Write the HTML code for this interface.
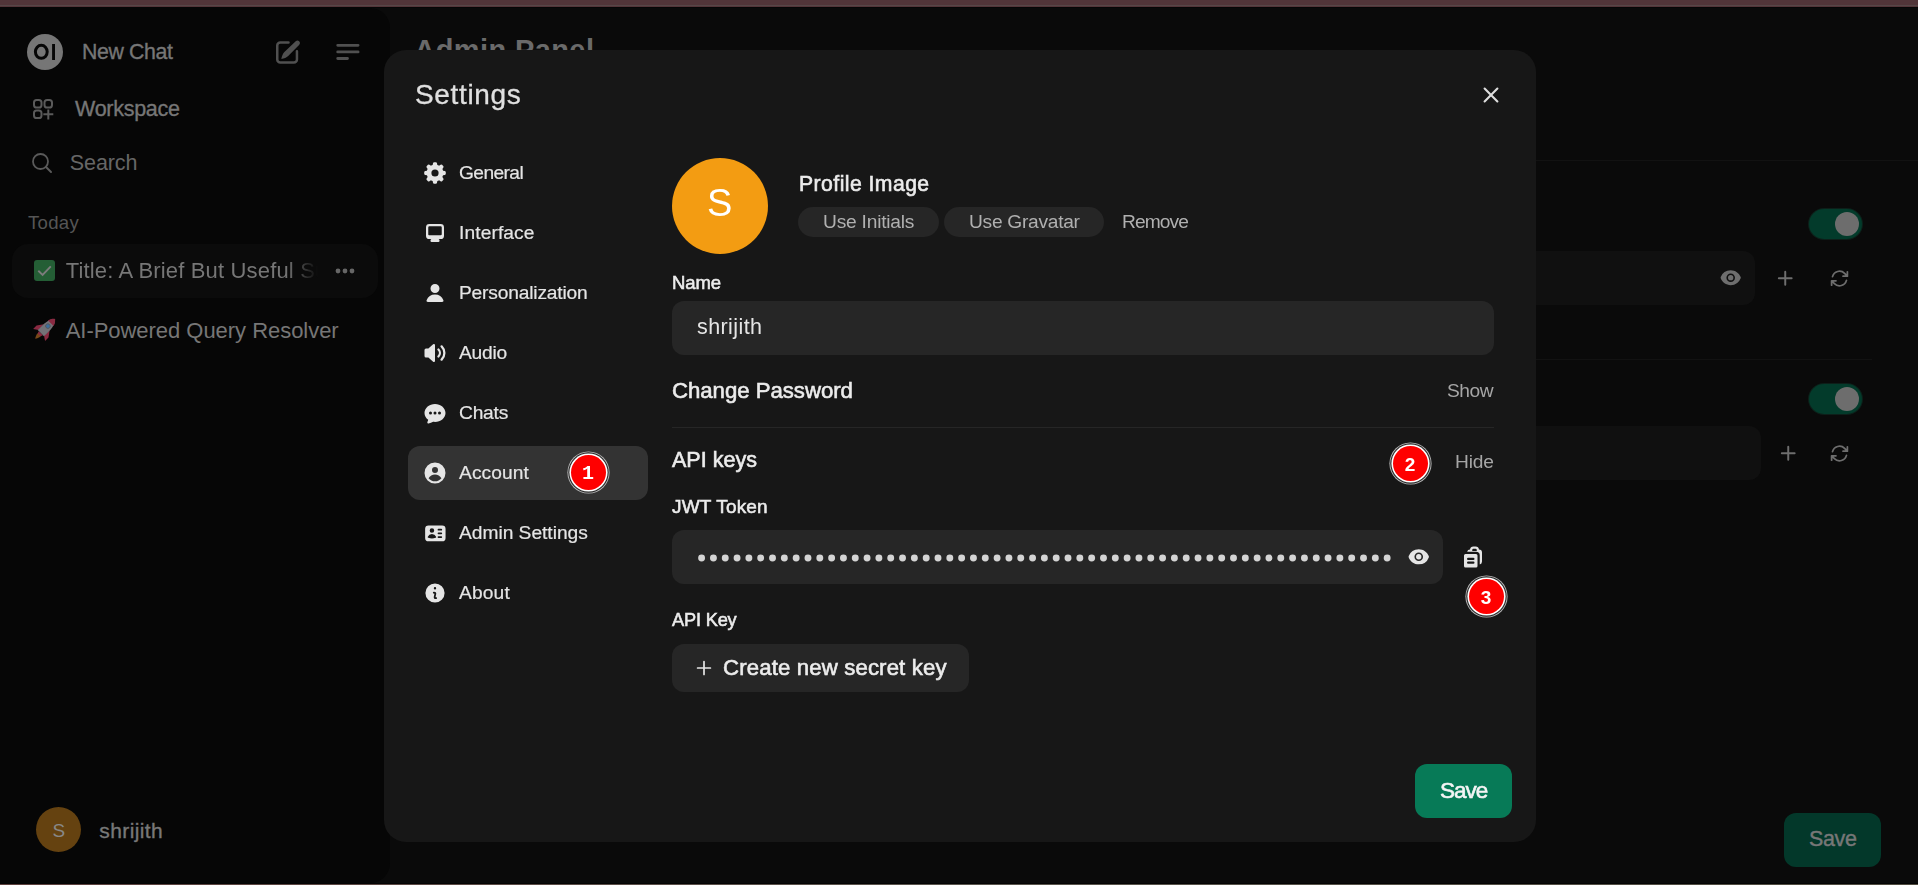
<!DOCTYPE html><html><head><meta charset="utf-8"><style>
html,body{margin:0;padding:0;width:1918px;height:885px;overflow:hidden;background:#0a0a0a}
body{position:relative;font-family:"Liberation Sans",sans-serif}
.r{position:absolute;display:block}
.t{position:absolute;white-space:nowrap;line-height:1}
</style></head><body>
<div class="r" style="left:0px;top:0px;width:1918px;height:885px;background:#0a0a0a;border-radius:0px;"></div>
<div class="r" style="left:0px;top:0px;width:1918px;height:5px;background:#513539;border-radius:0px;"></div>
<div class="r" style="left:0px;top:5px;width:1918px;height:1px;background:#564647;border-radius:0px;"></div>
<div class="r" style="left:0px;top:6px;width:1918px;height:1px;background:#533539;border-radius:0px;"></div>
<div class="r" style="left:0px;top:7px;width:1918px;height:1px;background:#050606;border-radius:0px;"></div>
<div class="r" style="left:0px;top:883px;width:1918px;height:1px;background:#040404;border-radius:0px;"></div>
<div class="r" style="left:0px;top:884px;width:1918px;height:1px;background:linear-gradient(90deg,#5c3f3c,#5a554d 50%,#4f4b3f);border-radius:0px;"></div>
<div class="r" style="left:0px;top:8px;width:390px;height:875px;background:#060606;border-radius:0px;border-radius:0 20px 20px 0;"></div>
<svg class="r" style="left:27px;top:34px" width="36" height="36" viewBox="0 0 36 36"><circle cx="18" cy="18" r="18" fill="#767676"/><ellipse cx="14.3" cy="17.8" rx="5.9" ry="6.5" fill="none" stroke="#060606" stroke-width="3"/><rect x="25.1" y="10" width="2.9" height="16" fill="#060606"/></svg>
<div class="t" style="left:82.00px;top:41.97px;font-size:21.3px;color:#767676;letter-spacing:-0.358px;-webkit-text-stroke:0.35px #767676;">New Chat</div>
<svg class="r" style="left:274px;top:38px" width="28" height="28" viewBox="0 0 28 28"><path d="M14.5 4.55H6.25a3 3 0 0 0-3 3V21.55a3 3 0 0 0 3 3H19.95a3 3 0 0 0 3-3V13.3" fill="none" stroke="#505050" stroke-width="2.5" stroke-linecap="round"/><path d="M21.7 3.2a2.55 2.55 0 0 1 3.6 3.6L14.2 17.9C12.5 19.4 10.3 20.4 7.3 21 7.9 18 8.9 15.8 10.4 14.1Z" fill="#505050"/></svg>
<svg class="r" style="left:335px;top:42px" width="26" height="20" viewBox="0 0 26 20"><path d="M2.7 3.3h20.4M2.7 9.9h20.4M2.7 16.5h9.8" stroke="#505050" stroke-width="2.8" stroke-linecap="round"/></svg>
<svg class="r" style="left:32px;top:98px" width="22" height="23" viewBox="0 0 22 23"><g fill="none" stroke="#5a5a5a" stroke-width="2"><rect x="2" y="2" width="7.5" height="7.5" rx="2.6"/><rect x="12.5" y="2" width="7.5" height="7.5" rx="2.6"/><rect x="2" y="12.5" width="7.5" height="7.5" rx="2.6"/><path d="M16.3 11.5v10M11.3 16.3h10"/></g></svg>
<div class="t" style="left:75.00px;top:98.80px;font-size:21.5px;color:#767676;letter-spacing:-0.272px;-webkit-text-stroke:0.35px #767676;">Workspace</div>
<svg class="r" style="left:31px;top:152px" width="22" height="22" viewBox="0 0 22 22"><circle cx="9.5" cy="9.5" r="7.5" fill="none" stroke="#5a5a5a" stroke-width="1.8"/><path d="M15 15l5 5" stroke="#5a5a5a" stroke-width="2" stroke-linecap="round"/></svg>
<div class="t" style="left:69.80px;top:152.60px;font-size:21.5px;color:#666666;letter-spacing:-0.091px;">Search</div>
<div class="t" style="left:28.00px;top:214.25px;font-size:18.6px;color:#555555;letter-spacing:0.284px;">Today</div>
<div class="r" style="left:12px;top:244px;width:366px;height:54px;background:#0b0b0b;border-radius:16px;"></div>
<svg class="r" style="left:34px;top:260px" width="21" height="21" viewBox="0 0 21 21"><rect x="0" y="0" width="21" height="21" rx="3" fill="#245e35"/><path d="M4.3 10.8l4.3 4.1L16.8 6.3" fill="none" stroke="#7c7c7c" stroke-width="1.9"/></svg>
<div class="t" style="left:65.7px;top:258px;font-size:22px;letter-spacing:0.16px;color:#767676;width:252px;overflow:hidden;-webkit-mask-image:linear-gradient(to right,#000 220px,transparent 252px);line-height:26px">Title: A Brief But Useful Summary</div>
<svg class="r" style="left:335px;top:267px" width="20" height="8" viewBox="0 0 20 8"><circle cx="3" cy="4" r="2.4" fill="#666"/><circle cx="10" cy="4" r="2.4" fill="#666"/><circle cx="17" cy="4" r="2.4" fill="#666"/></svg>
<svg class="r" style="left:30.5px;top:314px" width="29" height="29" viewBox="0 0 24 24"><g transform="rotate(45 12 12)"><path d="M10.2 19h3.6C13.8 21.5 12.8 23 12 24 11.2 23 10.2 21.5 10.2 19Z" fill="#7a4818"/><path d="M8.6 10.5L5 15.5V19.5L8.8 17ZM15.4 10.5L19 15.5V19.5L15.2 17Z" fill="#8a2a42"/><path d="M12 0.8C15.6 3.8 16 10 15.6 17.5H8.4C8 10 8.4 3.8 12 0.8Z" fill="#747278"/><path d="M12 0.8C13.8 2.3 14.8 4 15.3 5.8H8.7C9.2 4 10.2 2.3 12 0.8Z" fill="#8a2a42"/><path d="M9.6 17.5h4.8l-.7 2h-3.4Z" fill="#8a2a42"/><circle cx="12" cy="9.2" r="1.9" fill="#3d6d9c" stroke="#555" stroke-width=".7"/></g></svg>
<div class="t" style="left:65.70px;top:320.37px;font-size:22px;color:#767676;letter-spacing:-0.037px;">AI-Powered Query Resolver</div>
<div class="r" style="left:36px;top:807px;width:45px;height:45px;border-radius:50%;background:#654210"></div>
<div class="t" style="left:52.50px;top:820.91px;font-size:19px;color:#888888;">S</div>
<div class="t" style="left:99.30px;top:819.82px;font-size:21px;color:#787878;letter-spacing:0.387px;-webkit-text-stroke:0.35px #787878;">shrijith</div>
<div class="t" style="left:414.30px;top:35.75px;font-size:29px;color:#6a6a6a;font-weight:700;letter-spacing:0.400px;">Admin Panel</div>
<div class="r" style="left:390px;top:160px;width:1528px;height:1px;background:#121212;border-radius:0px;"></div>
<div class="r" style="left:390px;top:359px;width:1482px;height:1px;background:#121212;border-radius:0px;"></div>
<div class="r" style="left:1809px;top:209px;width:53px;height:30px;border-radius:15px;background:#033b2b;box-shadow:0 0 0 1px #0d1f19"></div>
<div class="r" style="left:1835px;top:212px;width:24px;height:24px;border-radius:50%;background:#6d6d6d"></div>
<div class="r" style="left:1809px;top:384px;width:53px;height:30px;border-radius:15px;background:#033b2b;box-shadow:0 0 0 1px #0d1f19"></div>
<div class="r" style="left:1835px;top:387px;width:24px;height:24px;border-radius:50%;background:#6d6d6d"></div>
<div class="r" style="left:390px;top:251px;width:1365px;height:54px;background:#101010;border-radius:12px;"></div>
<div class="r" style="left:390px;top:426px;width:1371px;height:54px;background:#101010;border-radius:12px;"></div>
<svg class="r" style="left:1720.30px;top:267.30px" width="21.4" height="21.4" viewBox="0 0 20 20" fill="#6e6e6e" ><path fill-rule="evenodd" d="M10 12.5a2.5 2.5 0 100-5 2.5 2.5 0 000 5z"/><path fill-rule="evenodd" d="M.664 10.59a1.651 1.651 0 010-1.186A10.004 10.004 0 0110 3c4.257 0 7.893 2.66 9.336 6.41.147.381.146.804 0 1.186A10.004 10.004 0 0110 17c-4.257 0-7.893-2.66-9.336-6.41zM14 10a4 4 0 11-8 0 4 4 0 018 0z"/></svg>
<svg class="r" style="left:1774.75px;top:267.75px" width="20.5" height="20.5" viewBox="0 0 24 24" fill="none" stroke="#6e6e6e"><path d="M12 4.5v15m7.5-7.5h-15" fill="none" stroke-width="2.3" stroke-linecap="round"/></svg>
<svg class="r" style="left:1828.50px;top:267.50px" width="21" height="21" viewBox="0 0 24 24" fill="none" stroke="#6e6e6e"><path d="M16.023 9.348h4.992v-.001M2.985 19.644v-4.992m0 0h4.992m-4.993 0l3.181 3.183a8.25 8.25 0 0013.803-3.7M4.031 9.865a8.25 8.25 0 0113.803-3.7l3.181 3.182m0-4.991v4.99" fill="none" stroke-width="2" stroke-linecap="round" stroke-linejoin="round"/></svg>
<svg class="r" style="left:1777.75px;top:442.75px" width="20.5" height="20.5" viewBox="0 0 24 24" fill="none" stroke="#6e6e6e"><path d="M12 4.5v15m7.5-7.5h-15" fill="none" stroke-width="2.3" stroke-linecap="round"/></svg>
<svg class="r" style="left:1828.50px;top:442.50px" width="21" height="21" viewBox="0 0 24 24" fill="none" stroke="#6e6e6e"><path d="M16.023 9.348h4.992v-.001M2.985 19.644v-4.992m0 0h4.992m-4.993 0l3.181 3.183a8.25 8.25 0 0013.803-3.7M4.031 9.865a8.25 8.25 0 0113.803-3.7l3.181 3.182m0-4.991v4.99" fill="none" stroke-width="2" stroke-linecap="round" stroke-linejoin="round"/></svg>
<div class="r" style="left:1784px;top:813px;width:97px;height:54px;background:#03382a;border-radius:12px;"></div>
<div class="t" style="left:1809.00px;top:828.80px;font-size:21.5px;color:#777777;letter-spacing:-0.340px;-webkit-text-stroke:0.4px #777777;">Save</div>
<div class="r" style="left:384px;top:50px;width:1152px;height:792px;background:#171717;border-radius:22px;"></div>
<div class="t" style="left:414.80px;top:81.29px;font-size:28px;color:#e0e0e0;letter-spacing:0.654px;-webkit-text-stroke:0.3px #e0e0e0;will-change:transform;">Settings</div>
<svg class="r" style="left:1481px;top:85px" width="20" height="20" viewBox="0 0 20 20"><path d="M3.6 3.6l12.8 12.8M16.4 3.6L3.6 16.4" stroke="#dedede" stroke-width="2.1" stroke-linecap="round"/></svg>
<div class="r" style="left:408px;top:446px;width:240px;height:54px;background:#333333;border-radius:12px;"></div>
<svg class="r" style="left:423.00px;top:160.90px" width="24" height="24" viewBox="0 0 20 20" fill="#e5e5e5" ><path fill-rule="evenodd" d="M8.34 1.804A1 1 0 019.32 1h1.36a1 1 0 01.98.804l.295 1.473c.497.144.971.342 1.416.587l1.25-.834a1 1 0 011.262.125l.962.962a1 1 0 01.125 1.262l-.834 1.25c.245.445.443.919.587 1.416l1.473.294a1 1 0 01.804.98v1.361a1 1 0 01-.804.98l-1.473.295a6.95 6.95 0 01-.587 1.416l.834 1.25a1 1 0 01-.125 1.262l-.962.962a1 1 0 01-1.262.125l-1.25-.834a6.953 6.953 0 01-1.416.587l-.294 1.473a1 1 0 01-.98.804H9.32a1 1 0 01-.98-.804l-.295-1.473a6.957 6.957 0 01-1.416-.587l-1.25.834a1 1 0 01-1.262-.125l-.962-.962a1 1 0 01-.125-1.262l.834-1.25a6.957 6.957 0 01-.587-1.416l-1.473-.294A1 1 0 011 10.68V9.32a1 1 0 01.804-.98l1.473-.295c.144-.497.342-.971.587-1.416l-.834-1.25a1 1 0 01.125-1.262l.962-.962A1 1 0 015.38 3.03l1.25.834a6.957 6.957 0 011.416-.587l.294-1.473zM13 10a3 3 0 11-6 0 3 3 0 016 0z"/></svg>
<div class="t" style="left:459.30px;top:163.14px;font-size:19.2px;color:#e5e5e5;letter-spacing:-0.592px;-webkit-text-stroke:0.2px #e5e5e5;will-change:transform;">General</div>
<svg class="r" style="left:423.00px;top:220.90px" width="24" height="24" viewBox="0 0 16 16" fill="#e5e5e5" ><path fill-rule="evenodd" d="M2 4.25A2.25 2.25 0 0 1 4.25 2h7.5A2.25 2.25 0 0 1 14 4.25v5.5A2.25 2.25 0 0 1 11.75 12h-1.312c.1.128.21.248.328.36a.75.75 0 0 1 .234.545v.345a.75.75 0 0 1-.75.75h-4.5a.75.75 0 0 1-.75-.75v-.345a.75.75 0 0 1 .234-.545c.118-.111.228-.232.328-.36H4.25A2.25 2.25 0 0 1 2 9.75v-5.5Zm2.25-.75a.75.75 0 0 0-.75.75v4.5c0 .414.336.75.75.75h7.5a.75.75 0 0 0 .75-.75v-4.5a.75.75 0 0 0-.75-.75h-7.5Z"/></svg>
<div class="t" style="left:459.30px;top:223.14px;font-size:19.2px;color:#e5e5e5;letter-spacing:0.101px;-webkit-text-stroke:0.2px #e5e5e5;will-change:transform;">Interface</div>
<svg class="r" style="left:423.00px;top:280.90px" width="24" height="24" viewBox="0 0 16 16" fill="#e5e5e5" ><path d="M8 8a3 3 0 1 0 0-6 3 3 0 0 0 0 6ZM12.735 14c.618 0 1.093-.561.872-1.139a6.002 6.002 0 0 0-11.215 0c-.22.578.254 1.139.872 1.139h9.47Z"/></svg>
<div class="t" style="left:459.30px;top:283.14px;font-size:19.2px;color:#e5e5e5;letter-spacing:-0.173px;-webkit-text-stroke:0.2px #e5e5e5;will-change:transform;">Personalization</div>
<svg class="r" style="left:423.00px;top:340.90px" width="24" height="24" viewBox="0 0 16 16" fill="#e5e5e5" ><path d="M7.557 2.066A.75.75 0 0 1 8 2.75v10.5a.75.75 0 0 1-1.248.56L3.59 11H2a1 1 0 0 1-1-1V6a1 1 0 0 1 1-1h1.59l3.162-2.81a.75.75 0 0 1 .805-.124ZM12.95 3.05a.75.75 0 1 0-1.06 1.06 5.5 5.5 0 0 1 0 7.78.75.75 0 1 0 1.06 1.06 7 7 0 0 0 0-9.9Z"/><path d="M10.828 5.172a.75.75 0 1 0-1.06 1.06 2.5 2.5 0 0 1 0 3.536.75.75 0 1 0 1.06 1.06 4 4 0 0 0 0-5.656Z"/></svg>
<div class="t" style="left:459.30px;top:343.14px;font-size:19.2px;color:#e5e5e5;letter-spacing:-0.213px;-webkit-text-stroke:0.2px #e5e5e5;will-change:transform;">Audio</div>
<svg class="r" style="left:423.00px;top:400.90px" width="24" height="24" viewBox="0 0 16 16" fill="#e5e5e5" ><path fill-rule="evenodd" d="M8 2C4.262 2 1 4.57 1 8c0 1.86.98 3.486 2.455 4.566a3.472 3.472 0 0 1-.469 1.26.75.75 0 0 0 .713 1.14 6.961 6.961 0 0 0 3.06-1.06c.403.062.818.094 1.241.094 3.738 0 7-2.57 7-6s-3.262-6-7-6ZM5 9a1 1 0 1 0 0-2 1 1 0 0 0 0 2Zm4-1a1 1 0 1 1-2 0 1 1 0 0 1 2 0Zm2 1a1 1 0 1 0 0-2 1 1 0 0 0 0 2Z"/></svg>
<div class="t" style="left:459.30px;top:403.14px;font-size:19.2px;color:#e5e5e5;letter-spacing:-0.203px;-webkit-text-stroke:0.2px #e5e5e5;will-change:transform;">Chats</div>
<svg class="r" style="left:423.00px;top:460.90px" width="24" height="24" viewBox="0 0 16 16" fill="#e5e5e5" ><path fill-rule="evenodd" d="M15 8A7 7 0 1 1 1 8a7 7 0 0 1 14 0Zm-5-2a2 2 0 1 1-4 0 2 2 0 0 1 4 0ZM8 9c-1.825 0-3.422.977-4.295 2.437A5.49 5.49 0 0 0 8 13.5a5.49 5.49 0 0 0 4.294-2.063C11.422 9.977 9.825 9 8 9Z"/></svg>
<div class="t" style="left:459.30px;top:463.14px;font-size:19.2px;color:#e5e5e5;letter-spacing:0.082px;-webkit-text-stroke:0.2px #e5e5e5;will-change:transform;">Account</div>
<svg class="r" style="left:423.65px;top:521.55px" width="22.7" height="22.7" viewBox="0 0 20 20" fill="#e5e5e5" ><path fill-rule="evenodd" d="M1 6a3 3 0 013-3h12a3 3 0 013 3v8a3 3 0 01-3 3H4a3 3 0 01-3-3V6zm4 1.5a2 2 0 114 0 2 2 0 01-4 0zm2 3a4 4 0 00-3.665 2.395.75.75 0 00.416 1A8.98 8.98 0 007 14.5a8.98 8.98 0 003.249-.604.75.75 0 00.416-1.001A4.001 4.001 0 007 10.5zm5-3.75a.75.75 0 01.75-.75h2.5a.75.75 0 010 1.5h-2.5a.75.75 0 01-.75-.75zm0 6.5a.75.75 0 01.75-.75h2.5a.75.75 0 010 1.5h-2.5a.75.75 0 01-.75-.75zm.75-4a.75.75 0 000 1.5h2.5a.75.75 0 000-1.5h-2.5z"/></svg>
<div class="t" style="left:459.30px;top:523.14px;font-size:19.2px;color:#e5e5e5;letter-spacing:-0.017px;-webkit-text-stroke:0.2px #e5e5e5;will-change:transform;">Admin Settings</div>
<svg class="r" style="left:423.00px;top:580.90px" width="24" height="24" viewBox="0 0 20 20" fill="#e5e5e5" ><path fill-rule="evenodd" d="M18 10a8 8 0 11-16 0 8 8 0 0116 0zm-7-4a1 1 0 11-2 0 1 1 0 012 0zM9 9a.75.75 0 000 1.5h.253a.25.25 0 01.244.304l-.459 2.066A1.75 1.75 0 0010.747 15H11a.75.75 0 000-1.5h-.253a.25.25 0 01-.244-.304l.459-2.066A1.75 1.75 0 009.253 9H9z"/></svg>
<div class="t" style="left:459.30px;top:583.14px;font-size:19.2px;color:#e5e5e5;letter-spacing:0.148px;-webkit-text-stroke:0.2px #e5e5e5;will-change:transform;">About</div>
<div class="r" style="left:570.5px;top:454.5px;width:35px;height:35px;border-radius:50%;background:#ff0000;box-shadow:0 0 0 1.6px #ffffff,0 0 0 2.7px #2a2a2a,0 0 0 3.6px #b8b8b8"></div>
<div class="t" style="left:573px;top:462.7px;width:30px;text-align:center;font-size:20px;line-height:21px;font-weight:700;color:#fff;font-family:'Liberation Mono';will-change:transform">1</div>
<div class="r" style="left:672px;top:158px;width:96px;height:96px;border-radius:50%;background:#f39c12"></div>
<div class="t" style="left:706.80px;top:184.33px;font-size:38px;color:#ffffff;will-change:transform;">S</div>
<div class="t" style="left:798.60px;top:172.65px;font-size:21.2px;color:#ececec;letter-spacing:0.444px;-webkit-text-stroke:0.6px #ececec;will-change:transform;">Profile Image</div>
<div class="r" style="left:798px;top:207px;width:141px;height:30px;background:#262626;border-radius:15px;"></div>
<div class="t" style="left:822.50px;top:211.84px;font-size:19.2px;color:#b0b0b0;letter-spacing:-0.217px;will-change:transform;">Use Initials</div>
<div class="r" style="left:944px;top:207px;width:160px;height:30px;background:#262626;border-radius:15px;"></div>
<div class="t" style="left:969.00px;top:211.84px;font-size:19.2px;color:#b0b0b0;letter-spacing:-0.286px;will-change:transform;">Use Gravatar</div>
<div class="t" style="left:1122.00px;top:211.84px;font-size:19.2px;color:#b0b0b0;letter-spacing:-0.904px;will-change:transform;">Remove</div>
<div class="t" style="left:672.00px;top:273.94px;font-size:18.5px;color:#ececec;letter-spacing:-0.132px;-webkit-text-stroke:0.55px #ececec;will-change:transform;">Name</div>
<div class="r" style="left:672px;top:301px;width:822px;height:54px;background:#262626;border-radius:12px;"></div>
<div class="t" style="left:696.50px;top:317.30px;font-size:21.5px;color:#e5e5e5;letter-spacing:0.409px;will-change:transform;">shrijith</div>
<div class="t" style="left:672.00px;top:379.80px;font-size:22.2px;color:#ececec;letter-spacing:-0.027px;-webkit-text-stroke:0.6px #ececec;will-change:transform;">Change Password</div>
<div class="t" style="left:1447.00px;top:380.74px;font-size:19.2px;color:#a6a6a6;letter-spacing:-0.432px;will-change:transform;">Show</div>
<div class="r" style="left:672px;top:427px;width:822px;height:1px;background:#262626;border-radius:0px;"></div>
<div class="t" style="left:672.00px;top:450.40px;font-size:21.5px;color:#ececec;letter-spacing:0.026px;-webkit-text-stroke:0.6px #ececec;will-change:transform;">API keys</div>
<div class="r" style="left:1392.5px;top:445.5px;width:35px;height:35px;border-radius:50%;background:#ff0000;box-shadow:0 0 0 1.6px #ffffff,0 0 0 2.7px #2a2a2a,0 0 0 3.6px #b8b8b8"></div>
<div class="t" style="left:1395px;top:453.7px;width:30px;text-align:center;font-size:19px;line-height:21px;font-weight:700;color:#fff;font-family:'Liberation Sans';will-change:transform">2</div>
<div class="t" style="left:1454.70px;top:451.74px;font-size:19.2px;color:#a6a6a6;letter-spacing:-0.152px;will-change:transform;">Hide</div>
<div class="t" style="left:672.00px;top:496.51px;font-size:19px;color:#ececec;letter-spacing:0.158px;-webkit-text-stroke:0.55px #ececec;will-change:transform;">JWT Token</div>
<div class="r" style="left:672px;top:530px;width:771px;height:54px;background:#262626;border-radius:12px;"></div>
<svg class="r" style="left:672px;top:530px" width="771" height="54" fill="#d4d4d4"><circle cx="29.60" cy="28" r="3.45"/><circle cx="41.42" cy="28" r="3.45"/><circle cx="53.24" cy="28" r="3.45"/><circle cx="65.06" cy="28" r="3.45"/><circle cx="76.88" cy="28" r="3.45"/><circle cx="88.70" cy="28" r="3.45"/><circle cx="100.52" cy="28" r="3.45"/><circle cx="112.34" cy="28" r="3.45"/><circle cx="124.16" cy="28" r="3.45"/><circle cx="135.98" cy="28" r="3.45"/><circle cx="147.80" cy="28" r="3.45"/><circle cx="159.62" cy="28" r="3.45"/><circle cx="171.44" cy="28" r="3.45"/><circle cx="183.26" cy="28" r="3.45"/><circle cx="195.08" cy="28" r="3.45"/><circle cx="206.90" cy="28" r="3.45"/><circle cx="218.72" cy="28" r="3.45"/><circle cx="230.54" cy="28" r="3.45"/><circle cx="242.36" cy="28" r="3.45"/><circle cx="254.18" cy="28" r="3.45"/><circle cx="266.00" cy="28" r="3.45"/><circle cx="277.82" cy="28" r="3.45"/><circle cx="289.64" cy="28" r="3.45"/><circle cx="301.46" cy="28" r="3.45"/><circle cx="313.28" cy="28" r="3.45"/><circle cx="325.10" cy="28" r="3.45"/><circle cx="336.92" cy="28" r="3.45"/><circle cx="348.74" cy="28" r="3.45"/><circle cx="360.56" cy="28" r="3.45"/><circle cx="372.38" cy="28" r="3.45"/><circle cx="384.20" cy="28" r="3.45"/><circle cx="396.02" cy="28" r="3.45"/><circle cx="407.84" cy="28" r="3.45"/><circle cx="419.66" cy="28" r="3.45"/><circle cx="431.48" cy="28" r="3.45"/><circle cx="443.30" cy="28" r="3.45"/><circle cx="455.12" cy="28" r="3.45"/><circle cx="466.94" cy="28" r="3.45"/><circle cx="478.76" cy="28" r="3.45"/><circle cx="490.58" cy="28" r="3.45"/><circle cx="502.40" cy="28" r="3.45"/><circle cx="514.22" cy="28" r="3.45"/><circle cx="526.04" cy="28" r="3.45"/><circle cx="537.86" cy="28" r="3.45"/><circle cx="549.68" cy="28" r="3.45"/><circle cx="561.50" cy="28" r="3.45"/><circle cx="573.32" cy="28" r="3.45"/><circle cx="585.14" cy="28" r="3.45"/><circle cx="596.96" cy="28" r="3.45"/><circle cx="608.78" cy="28" r="3.45"/><circle cx="620.60" cy="28" r="3.45"/><circle cx="632.42" cy="28" r="3.45"/><circle cx="644.24" cy="28" r="3.45"/><circle cx="656.06" cy="28" r="3.45"/><circle cx="667.88" cy="28" r="3.45"/><circle cx="679.70" cy="28" r="3.45"/><circle cx="691.52" cy="28" r="3.45"/><circle cx="703.34" cy="28" r="3.45"/><circle cx="715.16" cy="28" r="3.45"/></svg>
<svg class="r" style="left:1408.25px;top:546.25px" width="21.5" height="21.5" viewBox="0 0 20 20" fill="#e5e5e5" ><path fill-rule="evenodd" d="M10 12.5a2.5 2.5 0 100-5 2.5 2.5 0 000 5z"/><path fill-rule="evenodd" d="M.664 10.59a1.651 1.651 0 010-1.186A10.004 10.004 0 0110 3c4.257 0 7.893 2.66 9.336 6.41.147.381.146.804 0 1.186A10.004 10.004 0 0110 17c-4.257 0-7.893-2.66-9.336-6.41zM14 10a4 4 0 11-8 0 4 4 0 018 0z"/></svg>
<svg class="r" style="left:1461.00px;top:545.00px" width="24" height="24" viewBox="0 0 16 16" fill="#e5e5e5" ><path fill-rule="evenodd" d="M11.986 3H12a2 2 0 0 1 2 2v6a2 2 0 0 1-1.5 1.937V7A2.5 2.5 0 0 0 10 4.5H4.063A2 2 0 0 1 6 3h.014A2.25 2.25 0 0 1 8.25 1h1.5a2.25 2.25 0 0 1 2.236 2ZM10.5 4v-.75a.75.75 0 0 0-.75-.75h-1.5a.75.75 0 0 0-.75.75V4h3Z"/><path fill-rule="evenodd" d="M3 6a1 1 0 0 0-1 1v7a1 1 0 0 0 1 1h7a1 1 0 0 0 1-1V7a1 1 0 0 0-1-1H3Zm1.75 2.5a.75.75 0 0 0 0 1.5h3.5a.75.75 0 0 0 0-1.5h-3.5ZM4 11.75a.75.75 0 0 1 .75-.75h3.5a.75.75 0 0 1 0 1.5h-3.5a.75.75 0 0 1-.75-.75Z"/></svg>
<div class="r" style="left:1468.5px;top:578.5px;width:35px;height:35px;border-radius:50%;background:#ff0000;box-shadow:0 0 0 1.6px #ffffff,0 0 0 2.7px #2a2a2a,0 0 0 3.6px #b8b8b8"></div>
<div class="t" style="left:1471px;top:586.7px;width:30px;text-align:center;font-size:19px;line-height:21px;font-weight:700;color:#fff;font-family:'Liberation Sans';will-change:transform">3</div>
<div class="t" style="left:672.00px;top:610.59px;font-size:18.2px;color:#ececec;letter-spacing:-0.165px;-webkit-text-stroke:0.55px #ececec;will-change:transform;">API Key</div>
<div class="r" style="left:672px;top:644px;width:297px;height:48px;background:#262626;border-radius:12px;"></div>
<svg class="r" style="left:693.5px;top:658px" width="20" height="20" viewBox="0 0 20 20"><path d="M10 3.6v12.8M3.6 10h12.8" stroke="#e5e5e5" stroke-width="1.7" stroke-linecap="round"/></svg>
<div class="t" style="left:723.30px;top:657.30px;font-size:22.2px;color:#ececec;letter-spacing:0.140px;-webkit-text-stroke:0.6px #ececec;will-change:transform;">Create new secret key</div>
<div class="r" style="left:1415px;top:764px;width:97px;height:54px;background:#077a57;border-radius:12px;"></div>
<div class="t" style="left:1439.70px;top:780.45px;font-size:22.5px;color:#f5f5f5;letter-spacing:-1.000px;-webkit-text-stroke:0.6px #f5f5f5;will-change:transform;">Save</div>
</body></html>
